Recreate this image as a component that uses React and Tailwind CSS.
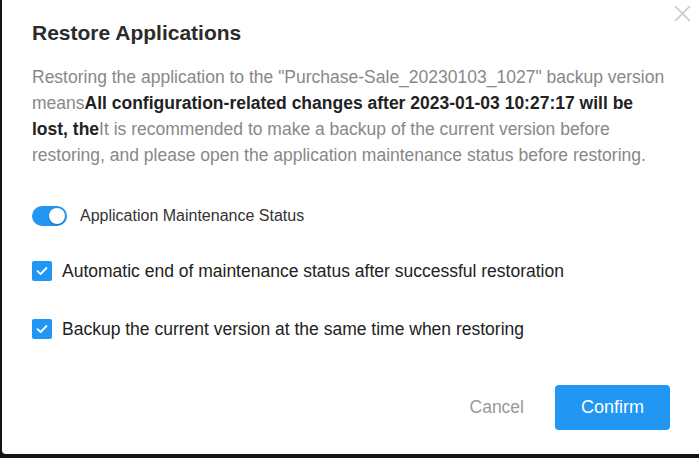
import { useState } from "react";

function Toggle({ on, onChange }) {
  return (
    <button
      type="button"
      onClick={() => onChange(!on)}
      className={`relative w-[35px] h-[20px] rounded-full shrink-0 transition ${on ? "bg-[#2196f3]" : "bg-[#ccc]"}`}
    >
      <span
        className={`absolute top-[2px] w-[16px] h-[16px] rounded-full bg-white shadow-[0_1px_2px_rgba(0,0,0,0.3)] transition-all ${on ? "left-[17px]" : "left-[2px]"}`}
      />
    </button>
  );
}

function Check({ checked, onChange, label }) {
  return (
    <label className="flex items-center h-[20px] cursor-pointer">
      <span
        onClick={() => onChange(!checked)}
        className={`w-[20px] h-[20px] rounded-[2px] shrink-0 flex items-center justify-center ${checked ? "bg-[#2196f3]" : "border border-[#ccc] bg-white"}`}
      >
        {checked && (
          <svg width="12" height="10" viewBox="0 0 12 10" fill="none">
            <path d="M1.5 5.2 L4.6 8 L10.5 2" stroke="white" strokeWidth="1.8" strokeLinecap="round" strokeLinejoin="round" />
          </svg>
        )}
      </span>
      <span className="ml-[10px] text-[17.5px] text-[#222] whitespace-nowrap">{label}</span>
    </label>
  );
}

export default function App() {
  const [maintenance, setMaintenance] = useState(true);
  const [autoEnd, setAutoEnd] = useState(true);
  const [backup, setBackup] = useState(true);

  return (
    <div className="w-full h-[458px] bg-[#141414] overflow-hidden" style={{ fontFamily: '"Liberation Sans", Arial, sans-serif' }}>
      <div className="relative ml-[2px] h-[454px] bg-white rounded-bl-[4px] pl-[30px] pr-[29px] pt-[20px]">
        {/* Close */}
        <button className="absolute top-[5px] right-[8px] text-[#c8c8c8]">
          <svg width="17" height="17" viewBox="0 0 17 17" fill="none">
            <path d="M1 1 L16 16 M16 1 L1 16" stroke="currentColor" strokeWidth="1.6" />
          </svg>
        </button>

        <h2 className="text-[21px] leading-[26px] font-bold text-[#2b2b2b]">Restore Applications</h2>

        <p className="mt-[18px] text-[17.5px] leading-[26px] text-[#888]">
          Restoring the application to the "Purchase-Sale_20230103_1027" backup version means
          <b className="text-[#222]">All configuration-related changes after 2023-01-03 10:27:17 will be lost, the</b>
          It is recommended to make a backup of the current version before restoring, and please open the application maintenance status before restoring.
        </p>

        <div className="mt-[38px] flex items-center h-[20px]">
          <Toggle on={maintenance} onChange={setMaintenance} />
          <span className="ml-[13px] text-[16px] text-[#333]">Application Maintenance Status</span>
        </div>

        <div className="mt-[35px]">
          <Check checked={autoEnd} onChange={setAutoEnd} label="Automatic end of maintenance status after successful restoration" />
        </div>
        <div className="mt-[38px]">
          <Check checked={backup} onChange={setBackup} label="Backup the current version at the same time when restoring" />
        </div>

        <div className="mt-[46px] flex justify-end items-center">
          <button className="text-[17.5px] text-[#999] mr-[31px]">Cancel</button>
          <button className="w-[115px] h-[45px] rounded-[4px] bg-[#2196f3] text-white text-[18px]">Confirm</button>
        </div>
      </div>
    </div>
  );
}
